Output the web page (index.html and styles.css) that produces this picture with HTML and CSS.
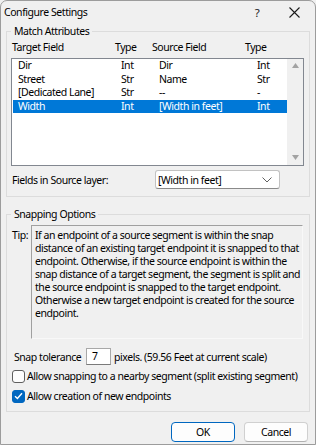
FILE: index.html
```html
<!DOCTYPE html>
<html lang="en">
<head>
    <meta charset="UTF-8">
    <title>Configure Settings</title>
    <link rel="stylesheet" href="styles.css">
</head>
<body>
    <div class="dialog">
        <div class="titlebar">
            <span class="title">Configure Settings</span>
            <span class="help">?</span>
            <span class="close">
                <svg width="11" height="11" viewBox="0 0 11 11"><path d="M0.5 0.5 L10.5 10.5 M10.5 0.5 L0.5 10.5" stroke="#1a1a1a" stroke-width="1.1" fill="none"/></svg>
            </span>
        </div>

        <fieldset class="group match">
            <legend>Match Attributes</legend>
            <div class="col-heads">
                <span>Target Field</span>
                <span>Type</span>
                <span>Source Field</span>
                <span>Type</span>
            </div>
            <div class="listbox">
                <div class="rows">
                    <div class="row"><span>Dir</span><span>Int</span><span>Dir</span><span>Int</span></div>
                    <div class="row"><span>Street</span><span>Str</span><span>Name</span><span>Str</span></div>
                    <div class="row"><span>[Dedicated Lane]</span><span>Str</span><span>--</span><span>-</span></div>
                    <div class="row selected"><span>Width</span><span>Int</span><span>[Width in feet]</span><span>Int</span></div>
                </div>
                <div class="scrollbar">
                    <svg width="7" height="5" viewBox="0 0 7 5"><path d="M0 5 L3.5 0 L7 5 Z" fill="#a3a3a3"/></svg>
                    <svg width="7" height="5" viewBox="0 0 7 5"><path d="M0 0 L3.5 5 L7 0 Z" fill="#a3a3a3"/></svg>
                </div>
            </div>
            <div class="source-row">
                <span class="source-label">Fields in Source layer:</span>
                <div class="combo">
                    <span>[Width in feet]</span>
                    <svg width="10" height="6" viewBox="0 0 10 6"><path d="M0.5 0.5 L5 5 L9.5 0.5" stroke="#606060" stroke-width="1" fill="none"/></svg>
                </div>
            </div>
        </fieldset>

        <fieldset class="group snapping">
            <legend>Snapping Options</legend>
            <div class="tip-row">
                <span class="tip-label">Tip:</span>
                <div class="tip-box">
                    If an endpoint of a source segment is within the snap<br>
                    distance of an existing target endpoint it is snapped to that<br>
                    endpoint. Otherwise, if the source endpoint is within the<br>
                    snap distance of a target segment, the segment is split and<br>
                    the source endpoint is snapped to the target endpoint.<br>
                    Otherwise a new target endpoint is created for the source<br>
                    endpoint.
                </div>
            </div>
            <div class="tolerance-row">
                <span class="tolerance-label">Snap tolerance</span>
                <span class="textbox">7</span>
                <span class="tolerance-note">pixels. (59.56 Feet at current scale)</span>
            </div>
            <div class="check-row">
                <span class="checkbox"></span>
                <span>Allow snapping to a nearby segment (split existing segment)</span>
            </div>
            <div class="check-row">
                <span class="checkbox checked">
                    <svg width="9" height="8" viewBox="0 0 9 8"><path d="M1 4.2 L3.4 6.5 L8 1.3" stroke="#ffffff" stroke-width="1.4" fill="none"/></svg>
                </span>
                <span>Allow creation of new endpoints</span>
            </div>
        </fieldset>

        <div class="buttons">
            <button class="btn default">OK</button>
            <button class="btn">Cancel</button>
        </div>
    </div>
</body>
</html>
```

FILE: styles.css
```css
body {
    margin: 0;
    padding: 0;
    background-color: #f0f0f0;
    font-family: "Noto Sans", sans-serif;
    font-size: 10.5px;
    letter-spacing: -0.45px;
    color: #000;
    white-space: nowrap;
}

.dialog {
    width: 316px;
    height: 445px;
    box-sizing: border-box;
    border: 1px solid #9c9c9c;
    border-radius: 7px 7px 0 0;
    background-color: #f0f0f0;
    display: flex;
    flex-direction: column;
    overflow: hidden;
}

.titlebar {
    height: 22px;
    display: flex;
    align-items: center;
    padding-left: 3px;
    flex-shrink: 0;
}

.title {
    flex: 1;
}

.help {
    width: 10px;
    text-align: center;
    font-size: 11.5px;
    margin-right: 27px;
    color: #1a1a1a;
}

.close {
    display: flex;
    width: 11px;
    margin-right: 15px;
}

.group {
    margin: 0 5px;
    border: 1px solid #dcdcdc;
    padding: 0 5px 0 4px;
    min-width: 0;
}

.group legend {
    padding: 0 3px;
    line-height: 16px;
}

.col-heads {
    display: grid;
    grid-template-columns: 103px 37px 93px 1fr;
    padding-left: 1px;
    line-height: 16px;
}

.listbox {
    margin-top: 3px;
    height: 108px;
    box-sizing: border-box;
    border: 1px solid #828790;
    background-color: #fff;
    display: flex;
}

.rows {
    flex: 1;
    padding-left: 1px;
}

.row {
    display: grid;
    grid-template-columns: 103px 38px 98px 1fr;
    height: 13.5px;
    line-height: 13.5px;
    padding-left: 5px;
}

.row.selected {
    background-color: #0078d7;
    color: #fff;
}

.scrollbar {
    width: 16px;
    background-color: #f0f0f0;
    display: flex;
    flex-direction: column;
    justify-content: space-between;
    align-items: center;
    padding: 4px 0 5px;
    box-sizing: border-box;
}

.source-row {
    display: flex;
    align-items: center;
    margin-top: 4px;
    padding-bottom: 7px;
}

.source-label {
    width: 144px;
    padding-left: 1px;
    box-sizing: border-box;
}

.combo {
    width: 125px;
    height: 19px;
    box-sizing: border-box;
    border: 1px solid #c2c2c2;
    border-bottom-color: #8a8a8a;
    border-radius: 3px;
    background-color: #fff;
    display: flex;
    align-items: center;
    justify-content: space-between;
    padding: 0 7px 0 2px;
}

.snapping {
    margin-top: 9px;
    padding-bottom: 5px;
}

.tip-row {
    display: flex;
    margin-top: 3px;
}

.tip-label {
    width: 19px;
    padding-left: 1px;
    padding-top: 4px;
    line-height: 13px;
}

.tip-box {
    width: 272px;
    height: 114px;
    box-sizing: border-box;
    border: 1px solid #a0a0a0;
    border-right-color: #f8f8f8;
    border-bottom-color: #f8f8f8;
    padding: 3px 0 0 3px;
    line-height: 13px;
}

.tolerance-row {
    display: flex;
    align-items: center;
    margin-top: 9px;
    height: 17px;
}

.tolerance-label {
    width: 75px;
    padding-left: 3px;
    box-sizing: border-box;
}

.textbox {
    width: 25px;
    height: 17px;
    box-sizing: border-box;
    border: 1px solid #a8a8a8;
    border-bottom-color: #7a7a7a;
    background-color: #fff;
    padding-left: 5px;
    line-height: 15px;
}

.tolerance-note {
    margin-left: 3px;
}

.check-row {
    display: flex;
    align-items: center;
    height: 20px;
    padding-left: 1px;
}

.tolerance-row + .check-row {
    margin-top: 1px;
}

.checkbox {
    flex-shrink: 0;
    width: 13px;
    height: 13px;
    box-sizing: border-box;
    border: 1px solid #5f5f5f;
    border-radius: 3px;
    background-color: #fdfdfd;
    margin-right: 2px;
    display: flex;
    align-items: center;
    justify-content: center;
}

.checkbox.checked {
    background-color: #0067c0;
    border-color: #0067c0;
}

.buttons {
    display: flex;
    justify-content: flex-end;
    gap: 9px;
    margin-top: 10px;
    padding-right: 7px;
}

.btn {
    width: 64px;
    height: 20px;
    box-sizing: border-box;
    font-family: inherit;
    font-size: 10.5px;
    letter-spacing: -0.45px;
    background-color: #fdfdfd;
    border: 1px solid #d0d0d0;
    border-bottom-color: #b0b0b0;
    border-radius: 4px;
    padding: 0;
    color: #000;
}

.btn.default {
    border: 1px solid #0067c0;
}
```
